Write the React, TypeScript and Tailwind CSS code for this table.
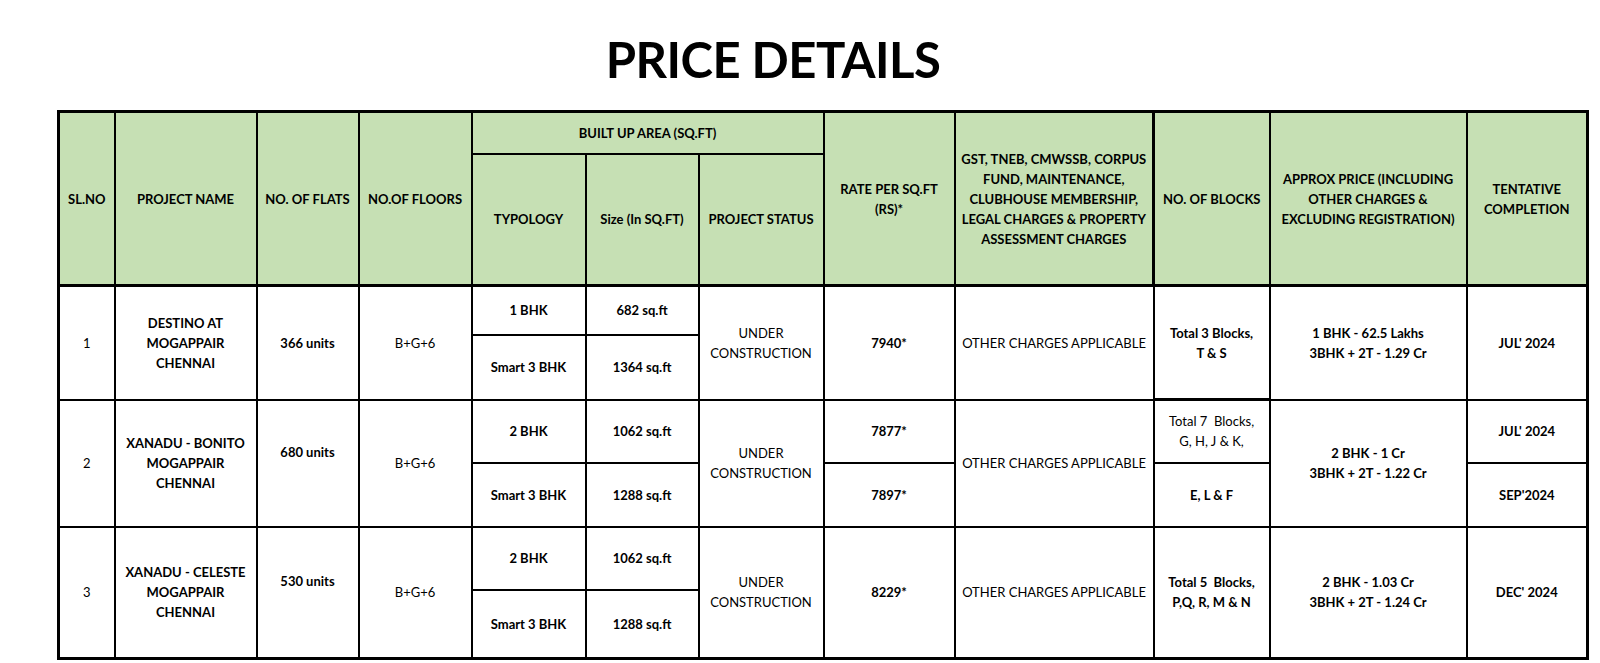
import React from 'react';

const th = 'border-2 border-black bg-[#c6e0b4] font-bold text-center align-middle leading-[20px] px-0.5';
const td = 'border-2 border-black text-center align-middle leading-[20px] px-0.5';

const App: React.FC = () => {
  return (
    <div className="min-h-screen bg-white text-black font-['Lato',sans-serif]">
      <div className="w-[1546px] pt-[30px] text-center">
        <h1 className="text-[49px] font-bold leading-[58px] tracking-[-0.5px]">PRICE DETAILS</h1>
      </div>

      <table className="ml-[57px] mt-[22px] w-[1532px] table-fixed border-collapse border-[3px] border-black text-[13px]">
        <colgroup>
          <col className="w-[56px]" />
          <col className="w-[142px]" />
          <col className="w-[102px]" />
          <col className="w-[113px]" />
          <col className="w-[114px]" />
          <col className="w-[113px]" />
          <col className="w-[125px]" />
          <col className="w-[131px]" />
          <col className="w-[199px]" />
          <col className="w-[116px]" />
          <col className="w-[197px]" />
          <col className="w-[121px]" />
        </colgroup>
        <thead>
          <tr className="h-[42px]">
            <th rowSpan={2} className={th}>SL.NO</th>
            <th rowSpan={2} className={th}>PROJECT NAME</th>
            <th rowSpan={2} className={th}>NO. OF FLATS</th>
            <th rowSpan={2} className={th}>NO.OF FLOORS</th>
            <th colSpan={3} className={th}>BUILT UP AREA (SQ.FT)</th>
            <th rowSpan={2} className={th}>
              RATE PER SQ.FT
              <br />
              (RS)*
            </th>
            <th rowSpan={2} className={`${th} border-r-[3px]`}>
              GST, TNEB, CMWSSB, CORPUS FUND, MAINTENANCE, CLUBHOUSE MEMBERSHIP, LEGAL CHARGES &amp; PROPERTY ASSESSMENT CHARGES
            </th>
            <th rowSpan={2} className={th}>NO. OF BLOCKS</th>
            <th rowSpan={2} className={th}>
              APPROX PRICE (INCLUDING OTHER CHARGES &amp; EXCLUDING REGISTRATION)
            </th>
            <th rowSpan={2} className={th}>
              TENTATIVE
              <br />
              COMPLETION
            </th>
          </tr>
          <tr className="h-[132px]">
            <th className={`${th} border-b-[3px]`}>TYPOLOGY</th>
            <th className={`${th} border-b-[3px]`}>Size (In SQ.FT)</th>
            <th className={`${th} border-b-[3px]`}>PROJECT STATUS</th>
          </tr>
        </thead>
        <tbody>
          {/* 1 - Destino */}
          <tr className="h-[49px] border-t-[3px] border-black">
            <td rowSpan={2} className={td}>1</td>
            <td rowSpan={2} className={`${td} font-bold`}>
              DESTINO AT
              <br />
              MOGAPPAIR
              <br />
              CHENNAI
            </td>
            <td rowSpan={2} className={`${td} font-bold`}>366 units</td>
            <td rowSpan={2} className={td}>B+G+6</td>
            <td className={`${td} font-bold`}>1 BHK</td>
            <td className={`${td} font-bold`}>682 sq.ft</td>
            <td rowSpan={2} className={td}>
              UNDER
              <br />
              CONSTRUCTION
            </td>
            <td rowSpan={2} className={`${td} font-bold`}>7940*</td>
            <td rowSpan={2} className={td}>OTHER CHARGES APPLICABLE</td>
            <td rowSpan={2} className={`${td} font-bold border-b-[3px]`}>
              Total 3 Blocks,
              <br />
              T &amp; S
            </td>
            <td rowSpan={2} className={`${td} font-bold`}>
              1 BHK - 62.5 Lakhs
              <br />
              3BHK + 2T - 1.29 Cr
            </td>
            <td rowSpan={2} className={`${td} font-bold`}>JUL' 2024</td>
          </tr>
          <tr className="h-[65px]">
            <td className={`${td} font-bold`}>Smart 3 BHK</td>
            <td className={`${td} font-bold`}>1364 sq.ft</td>
          </tr>

          {/* 2 - Bonito */}
          <tr className="h-[63px]">
            <td rowSpan={2} className={td}>2</td>
            <td rowSpan={2} className={`${td} font-bold`}>
              XANADU - BONITO
              <br />
              MOGAPPAIR
              <br />
              CHENNAI
            </td>
            <td rowSpan={2} className={`${td} font-bold pb-[22px]`}>680 units</td>
            <td rowSpan={2} className={td}>B+G+6</td>
            <td className={`${td} font-bold`}>2 BHK</td>
            <td className={`${td} font-bold`}>1062 sq.ft</td>
            <td rowSpan={2} className={td}>
              UNDER
              <br />
              CONSTRUCTION
            </td>
            <td className={`${td} font-bold`}>7877*</td>
            <td rowSpan={2} className={td}>OTHER CHARGES APPLICABLE</td>
            <td className={td}>
              Total 7&nbsp; Blocks,
              <br />
              G, H, J &amp; K,
            </td>
            <td rowSpan={2} className={`${td} font-bold`}>
              2 BHK - 1 Cr
              <br />
              3BHK + 2T - 1.22 Cr
            </td>
            <td className={`${td} font-bold`}>JUL' 2024</td>
          </tr>
          <tr className="h-[64px]">
            <td className={`${td} font-bold`}>Smart 3 BHK</td>
            <td className={`${td} font-bold`}>1288 sq.ft</td>
            <td className={`${td} font-bold`}>7897*</td>
            <td className={`${td} font-bold`}>E, L &amp; F</td>
            <td className={`${td} font-bold`}>SEP'2024</td>
          </tr>

          {/* 3 - Celeste */}
          <tr className="h-[63px]">
            <td rowSpan={2} className={td}>3</td>
            <td rowSpan={2} className={`${td} font-bold`}>
              XANADU - CELESTE
              <br />
              MOGAPPAIR
              <br />
              CHENNAI
            </td>
            <td rowSpan={2} className={`${td} font-bold pb-[22px]`}>530 units</td>
            <td rowSpan={2} className={td}>B+G+6</td>
            <td className={`${td} font-bold`}>2 BHK</td>
            <td className={`${td} font-bold`}>1062 sq.ft</td>
            <td rowSpan={2} className={td}>
              UNDER
              <br />
              CONSTRUCTION
            </td>
            <td rowSpan={2} className={`${td} font-bold`}>8229*</td>
            <td rowSpan={2} className={td}>OTHER CHARGES APPLICABLE</td>
            <td rowSpan={2} className={`${td} font-bold`}>
              Total 5&nbsp; Blocks,
              <br />
              P,Q, R, M &amp; N
            </td>
            <td rowSpan={2} className={`${td} font-bold`}>
              2 BHK - 1.03 Cr
              <br />
              3BHK + 2T - 1.24 Cr
            </td>
            <td rowSpan={2} className={`${td} font-bold`}>DEC' 2024</td>
          </tr>
          <tr className="h-[69px]">
            <td className={`${td} font-bold`}>Smart 3 BHK</td>
            <td className={`${td} font-bold`}>1288 sq.ft</td>
          </tr>
        </tbody>
      </table>
    </div>
  );
};

export default App;
